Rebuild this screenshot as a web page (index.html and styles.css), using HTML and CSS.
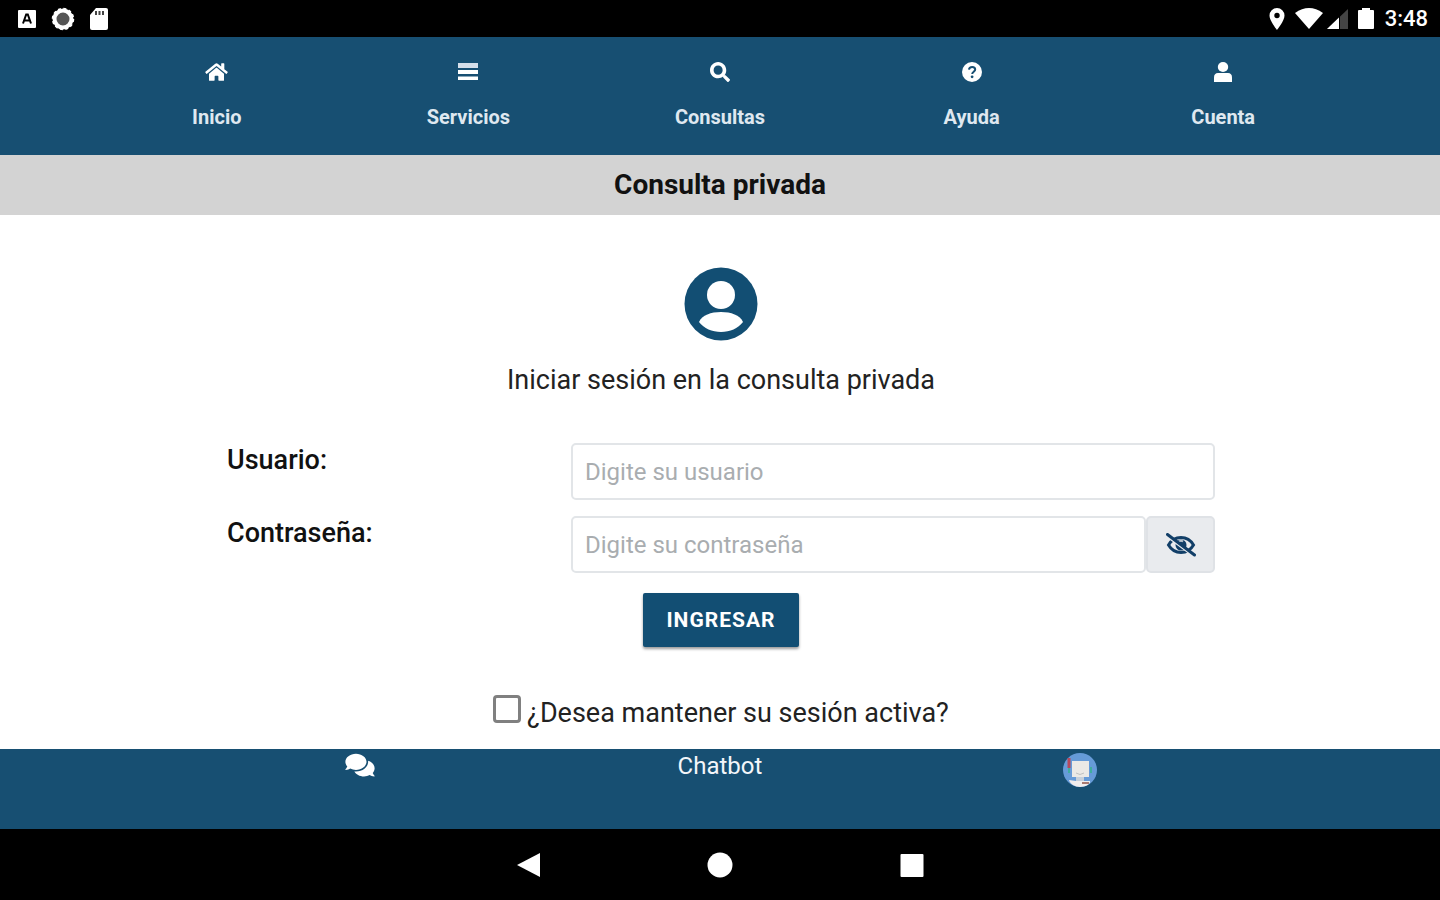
FILE: index.html
```
<!DOCTYPE html>
<html lang="es">
<head>
  <meta charset="UTF-8" />
  <meta name="viewport" content="width=device-width, initial-scale=1.0">
  <title>Consulta privada</title>
  <link rel="stylesheet" href="styles.css">
</head>
<body>

  <div class="status-bar">
    <div class="status-group">
      <svg width="20" height="20" viewBox="0 0 20 20"><rect x="1" y="1" width="18" height="18" rx="1" fill="#fff"/><path d="M6 14.500 9.200 5.500h1.600L14 14.500M7.500 11.500h5" fill="none" stroke="#000" stroke-width="2"/></svg>
      <svg width="24" height="24" viewBox="0 0 24 24"><circle cx="12" cy="12" r="8.500" fill="#555" stroke="#fff" stroke-width="4"/><circle cx="12" cy="12" r="10.500" fill="none" stroke="#fff" stroke-width="1.500" stroke-dasharray="3 2.500"/></svg>
      <svg width="20" height="24" viewBox="0 0 20 24"><path d="M7 1h10a2 2 0 0 1 2 2v18a2 2 0 0 1-2 2H3a2 2 0 0 1-2-2V8z" fill="#fff"/><path d="M7 4v4M10.500 4v4M14 4v4" stroke="#444" stroke-width="2"/></svg>
    </div>
    <div class="status-group status-right">
      <svg width="16" height="24" viewBox="0 0 16 24"><path fill="#fff" fill-rule="evenodd" d="M8 1a7.500 7.500 0 0 0-7.500 7.500C.5 14 8 23 8 23s7.500-9 7.500-14.500A7.500 7.500 0 0 0 8 1zm0 4.800a2.700 2.700 0 1 1 0 5.400 2.700 2.700 0 0 1 0-5.400z"/></svg>
      <svg class="wifi" width="28" height="24" viewBox="0 0 28 24"><path fill="#fff" d="M0 6Q14-4 28 6L14 22z"/></svg>
      <svg width="22" height="24" viewBox="0 0 22 24"><path fill="#444" d="M21 2v20H0z"/><path fill="#fff" d="M12 10.600V22H0z"/><path stroke="#000" d="M12.500 8v14"/></svg>
      <svg class="battery" width="18" height="24" viewBox="0 0 18 24"><path fill="#fff" d="M5 1h8v2h3a1 1 0 0 1 1 1v17a1 1 0 0 1-1 1H2a1 1 0 0 1-1-1V4a1 1 0 0 1 1-1h3z"/></svg>
      <span class="clock">3:48</span>
    </div>
  </div>

  <nav class="tabs">
    <a href="#inicio">
      <svg width="23" height="20" viewBox="0 0 576 512"><path d="M280.400 148.300 96 300.100V464a16 16 0 0 0 16 16l112-.3a16 16 0 0 0 16-16V368a16 16 0 0 1 16-16h64a16 16 0 0 1 16 16v95.600a16 16 0 0 0 16 16.100l112 .3a16 16 0 0 0 16-16V300L295.700 148.300a12.200 12.200 0 0 0-15.300 0zM571.600 251.500 488 182.600V44a12 12 0 0 0-12-12h-56a12 12 0 0 0-12 12v72.600L318.500 43a48 48 0 0 0-61 0L4.300 251.500a12 12 0 0 0-1.600 16.900l25.500 31a12 12 0 0 0 16.900 1.600l235.300-193.700a12.200 12.200 0 0 1 15.300 0L531 301a12 12 0 0 0 16.900-1.600l25.500-31a12 12 0 0 0-1.800-16.900z"/></svg>
      <span>Inicio</span>
    </a>
    <a href="#servicios">
      <svg width="20" height="20" viewBox="0 0 20 20"><path fill="#d5dfea" d="M0 1h20v5H0z"/><path d="M0 8h20v4H0zM0 14.500h20v3.500H0z"/></svg>
      <span>Servicios</span>
    </a>
    <a href="#consultas">
      <svg width="20" height="20" viewBox="0 0 512 512"><path d="M505 442.700 405.300 343c-4.500-4.500-10.600-7-17-7H372c27.600-35.300 44-79.700 44-128C416 93.100 322.900 0 208 0S0 93.100 0 208s93.100 208 208 208c48.300 0 92.700-16.400 128-44v16.300c0 6.400 2.500 12.500 7 17l99.700 99.700c9.400 9.400 24.600 9.400 33.900 0l28.300-28.300c9.400-9.400 9.400-24.600.1-34zM208 324c-64 0-116-52-116-116 0-64 52-116 116-116 64 0 116 52 116 116 0 64-52 116-116 116z"/></svg>
      <span>Consultas</span>
    </a>
    <a href="#ayuda">
      <svg width="20" height="20" viewBox="0 0 20 20"><circle cx="10" cy="10" r="10"/><path d="M7 7.600c.3-3.600 6.200-3.500 6.200 0 0 2-3 2.300-3 4.400" fill="none" stroke="#174f72" stroke-width="2"/><circle cx="10.100" cy="14.800" r="1.400" fill="#174f72"/></svg>
      <span>Ayuda</span>
    </a>
    <a href="#cuenta">
      <svg width="20" height="20" viewBox="0 0 20 20"><ellipse cx="10" cy="5" rx="5.200" ry="5"/><path d="M1 20v-4.500c0-3 1.500-4.500 4-4.500h10c2.500 0 4 1.500 4 4.500V20z"/></svg>
      <span>Cuenta</span>
    </a>
  </nav>

  <h1 class="page-title">Consulta privada</h1>

  <main>
    <svg class="avatar" width="74" height="74" viewBox="0 0 74 74"><circle cx="37" cy="37" r="36.500" fill="#124e73"/><circle cx="37" cy="28" r="14" fill="#fff"/><path d="M15 55c3-7 12-10 22-10s19 3 22 10c-5 6.500-13 10-22 10s-17-3.500-22-10z" fill="#fff"/></svg>
    <p class="intro">Iniciar sesión en la consulta privada</p>

    <form class="login">
      <div class="field">
        <label for="usuario">Usuario:</label>
        <input type="text" id="usuario" placeholder="Digite su usuario">
      </div>
      <div class="field">
        <label for="clave">Contraseña:</label>
        <div class="input-group">
          <input type="password" id="clave" placeholder="Digite su contraseña">
          <button type="button" class="toggle" aria-label="Mostrar contraseña">
            <svg width="30" height="24" viewBox="0 0 30 24"><path d="M2.500 12C6 6 10.500 4.500 15 4.500S24 6 27.500 12C24 18 19.500 19.500 15 19.500S6 18 2.500 12z" fill="none" stroke="#123f68" stroke-width="3"/><circle cx="15" cy="12" r="5.500" fill="#123f68"/><path d="M12 9.500q2.500-3 5-1" fill="none" stroke="#b8c4d0" stroke-width="2"/><path d="M1 3.500l27 20" stroke="#e9ebee" stroke-width="2"/><path d="M1.500 1.500l27 20.500" stroke="#123f68" stroke-width="3" stroke-linecap="round"/></svg>
          </button>
        </div>
      </div>
      <button type="submit" class="submit">INGRESAR</button>
      <div class="remember">
        <input type="checkbox" id="activa">
        <label for="activa">¿Desea mantener su sesión activa?</label>
      </div>
    </form>
  </main>

  <footer class="chat-bar">
    <svg width="30" height="26" viewBox="0 0 576 512"><path fill="#fff" d="M416 192c0-88.400-93.100-160-208-160S0 103.600 0 192c0 34.300 14.100 65.900 38 92-13.400 30.200-35.500 54.200-35.800 54.500-2.200 2.300-2.800 5.700-1.500 8.700S4.800 352 8 352c36.600 0 66.900-12.300 88.700-25 32.200 15.700 70.300 25 111.300 25 114.900 0 208-71.600 208-160zm122 220c23.900-26 38-57.700 38-92 0-66.900-53.500-124.200-129.300-148.100.9 6.600 1.300 13.300 1.300 20.100 0 105.900-107.700 192-240 192-10.800 0-21.300-.8-31.700-1.900C207.800 439.600 281.800 480 368 480c41 0 79.100-9.200 111.300-25 21.800 12.700 52.100 25 88.700 25 3.200 0 6.100-1.900 7.300-4.800 1.300-2.900.7-6.300-1.500-8.700-.3-.3-22.400-24.200-35.800-54.500z"/></svg>
    <a href="#chatbot">Chatbot</a>
    <svg width="36" height="36" viewBox="0 0 36 36"><circle cx="18" cy="18" r="17" fill="#669bd8"/><path d="M7 6v10" stroke="#b6495c" stroke-width="3"/><path d="M7 16v5M29 15v6" stroke="#3fae9f" stroke-width="2"/><path d="M10 9h17v16H10z" fill="#ebe9e6"/><path d="M14 25h8v4h-8z" fill="#c5cfdb"/><path d="M7 28l7 1h14c1 3-5 6-10 6S8 32 7 28z" fill="#f1eeee"/><path d="M20 31h7" stroke="#a77a72" stroke-width="2"/><path d="M14 21q4 3 8 0" fill="none" stroke="#bfc1c2"/></svg>
  </footer>

  <div class="system-nav">
    <button type="button" aria-label="Atrás"><svg width="26" height="26" viewBox="0 0 26 26"><path d="M25 1v24L2 13z"/></svg></button>
    <button type="button" aria-label="Inicio"><svg width="26" height="26" viewBox="0 0 26 26"><circle cx="13" cy="13" r="12.500"/></svg></button>
    <button type="button" aria-label="Recientes"><svg width="26" height="26" viewBox="0 0 26 26"><rect x="1.500" y="2" width="23" height="23" rx="1"/></svg></button>
  </div>

</body>
</html>
```
FILE: styles.css
```
* {
  margin: 0;
  padding: 0;
  box-sizing: border-box;
  font-family: Roboto, sans-serif;
}

body {
  display: flex;
  flex-direction: column;
  min-height: 100vh;
  background: #fff;
  color: #222;
}

svg {
  display: block;
}

.status-bar {
  display: flex;
  align-items: center;
  justify-content: space-between;
  height: 37px;
  padding: 0 12px 0 17px;
  background: #000;
}

.status-group {
  display: flex;
  align-items: center;
  gap: 14px;
}

.status-right {
  gap: 4px;
}

.wifi {
  margin-left: 6px;
}

.battery {
  margin: 0 6px 0 4px;
}

.clock {
  color: #fff;
  font-size: 22px;
  font-weight: 500;
}

.tabs {
  display: grid;
  grid-template-columns: repeat(5, 1fr);
  padding: 25px 91px;
  height: 118px;
  background: #174f72;
}

.tabs a {
  display: flex;
  flex-direction: column;
  align-items: center;
  gap: 23px;
  color: #dfe8f0;
  font-size: 20px;
  font-weight: 700;
  line-height: 24px;
  text-decoration: none;
}

.tabs svg {
  fill: #fff;
}

.page-title {
  background: #d3d3d3;
  color: #111;
  font-size: 28px;
  font-weight: 700;
  line-height: 60px;
  text-align: center;
}

main {
  flex: 1;
  display: flex;
  flex-direction: column;
  align-items: center;
  padding: 52px 225px 0 227px;
}

.intro {
  margin-top: 23px;
  font-size: 27px;
  line-height: 32px;
}

.login {
  display: flex;
  flex-direction: column;
  align-items: center;
  gap: 16px;
  width: 100%;
  margin-top: 47px;
}

.field {
  display: grid;
  grid-template-columns: 344px 1fr;
  width: 100%;
}

.field label {
  color: #111;
  font-size: 27px;
  font-weight: 500;
  line-height: 34px;
}

.field input {
  width: 100%;
  height: 57px;
  padding: 0 12px;
  border: 2px solid #e2e5e8;
  border-radius: 5px;
  background: #fff;
  font-size: 24px;
}

.field input::placeholder {
  color: #a9adb0;
}

.input-group {
  display: flex;
}

.toggle {
  display: flex;
  flex: none;
  align-items: center;
  justify-content: center;
  width: 69px;
  border: 2px solid #dfe2e6;
  border-radius: 5px;
  background: #e9ebee;
}

.submit {
  height: 54px;
  margin-top: 4px;
  padding: 0 23px;
  border: 0;
  border-radius: 2px;
  background: #124e73;
  color: #fff;
  font-size: 21px;
  font-weight: 700;
  letter-spacing: 1px;
  box-shadow: 0 2px 3px rgba(0, 0, 0, 0.4);
}

.remember {
  display: flex;
  gap: 6px;
  margin-top: 32px;
  font-size: 27px;
  line-height: 36px;
}

.remember input {
  appearance: none;
  width: 28px;
  height: 28px;
  border: 3px solid #808080;
  border-radius: 4px;
}

.remember input:checked {
  background: #124e73;
}

.chat-bar {
  display: grid;
  grid-template-columns: repeat(3, 1fr);
  justify-items: center;
  height: 80px;
  padding: 3px 180px 0;
  background: #174f72;
}

.chat-bar a {
  color: #f3f6fa;
  font-size: 24px;
  line-height: 28px;
  text-decoration: none;
}

.system-nav {
  display: flex;
  align-items: center;
  justify-content: center;
  gap: 166px;
  height: 71px;
  background: #000;
}

.system-nav button {
  border: 0;
  background: none;
}

.system-nav svg {
  fill: #fff;
}
```
